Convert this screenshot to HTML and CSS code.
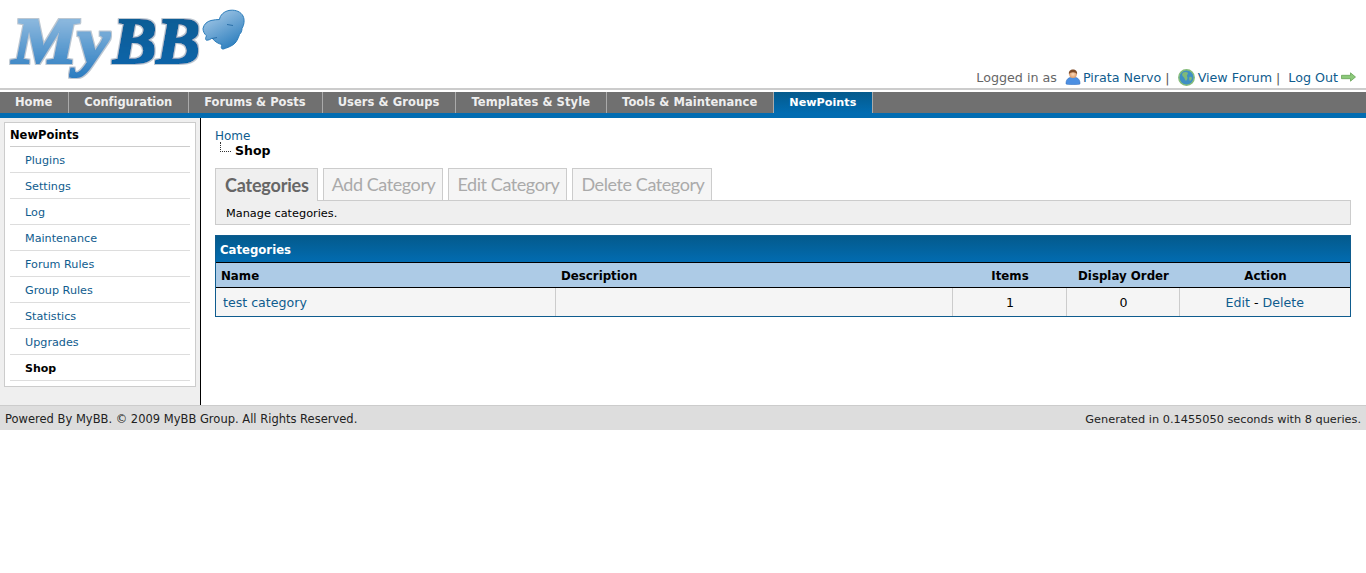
FILE: index.html
```html
<!DOCTYPE html>
<html lang="en">
<head>
  <meta charset="UTF-8">
  <title>NewPoints - Shop</title>
  <link rel="stylesheet" href="styles.css">
</head>
<body>

  <!-- Header -->
  <header class="logo-bar">
    <svg class="logo" width="250" height="84" viewBox="0 0 250 84">
      <defs>
        <linearGradient id="my-fill" x1="0" y1="0" x2="0" y2="1">
          <stop offset="0" stop-color="#a3c6e4"/>
          <stop offset="1" stop-color="#2a7cc0"/>
        </linearGradient>
        <linearGradient id="bb-fill" x1="0" y1="0" x2="0" y2="1">
          <stop offset="0" stop-color="#0f5a8f"/>
          <stop offset="1" stop-color="#0466ad"/>
        </linearGradient>
        <linearGradient id="bubble-fill" x1="0.2" y1="0" x2="0.8" y2="1">
          <stop offset="0" stop-color="#a9cbe8"/>
          <stop offset="1" stop-color="#2479bb"/>
        </linearGradient>
        <radialGradient id="head-fill">
          <stop offset="0" stop-color="#fbd9b8"/>
          <stop offset="1" stop-color="#dd9a68"/>
        </radialGradient>
        <filter id="logo-halo" x="-10%" y="-10%" width="120%" height="120%">
          <feMorphology in="SourceGraphic" operator="dilate" radius="0.7" result="fat"/>
          <feMorphology in="SourceAlpha" operator="dilate" radius="2.2" result="wide"/>
          <feFlood flood-color="#bcc7d1"/>
          <feComposite in2="wide" operator="in"/>
          <feGaussianBlur stdDeviation="0.5" result="halo"/>
          <feMerge>
            <feMergeNode in="halo"/>
            <feMergeNode in="fat"/>
          </feMerge>
        </filter>
      </defs>
      <g filter="url(#logo-halo)">
        <text class="logo-my" x="12" y="63" textLength="98" lengthAdjust="spacingAndGlyphs">My</text>
        <text class="logo-bb" x="113" y="63" textLength="87" lengthAdjust="spacingAndGlyphs">BB</text>
      </g>
      <path d="M203 28.500C204 24 207 21.500 211 20.500C214 19.800 217 19.500 219.500 19.500C219.800 15.500 224 11 230 10.300C236 9.600 241 12 243 16C245 20 244 25 242 28.500C242 31 241 33 239.500 34.500C238 39 236 43 233 44.800C230 47 226 48 223.500 49C221.500 49.200 220.500 48 222 44.500C219 44 215 42 212 38C210.500 39.500 208.500 40.200 206.500 40.200C205.300 39.800 205.300 38 206.500 35.800C204.500 34 203 31.500 203 28.500z" fill="url(#bubble-fill)" stroke="#2b7cba" stroke-width="1"/>
      <path d="M227 24.500l6 1M212 38.500l5-1" stroke="#2a6fa8" stroke-width="1" fill="none"/>
    </svg>
    <div class="user-links">
      <span class="logged-in">Logged in as</span>
      <svg class="icon icon-user" width="16" height="16" viewBox="0 0 16 16">
        <path d="M1 15c-.5-3 1.500-6 4-6.500h6c2.500.5 4.500 3.500 4 6.500-1.500 1-12.500 1-14 0z" fill="#4c8fe2" stroke="#3a70b8" stroke-width=".5"/>
        <circle cx="8" cy="5.300" r="3.800" fill="url(#head-fill)"/>
        <path d="M4 5.500C3.300 2 5.500.5 8 .5s4.700 1.500 4 5C11.500 4 10 3.200 8 3.200S4.500 4 4 5.500z" fill="#7e4a26"/>
      </svg>
      <a href="#">Pirata Nervo</a><span class="sep">|</span>
      <svg class="icon icon-globe" width="17" height="17" viewBox="0 0 17 17">
        <circle cx="8.500" cy="8.500" r="7.700" fill="#3f8fc4" stroke="#86bd7a" stroke-width="1.500"/>
        <path d="M5 3.500c2-1 4-.5 5 .5 0 1.500-1.500 2-1 3.500 1 1 .5 3-1 4.500-1.500-1-1-3-2.500-4C4 7 3.500 5 5 3.500zM11.500 8c1-.5 2 0 2.500 1-.3 1.500-1 2.500-2 3-.8-1-1-2.500-.5-4z" fill="#7fb97a"/>
      </svg>
      <a href="#">View Forum</a><span class="sep">|</span>
      <a class="logout" href="#">Log Out</a>
      <svg class="icon" width="15" height="10" viewBox="0 0 15 10">
        <path d="M.5 3.300h9V.8L14.500 5l-5 4.200V6.700h-9z" fill="#8cc97a" stroke="#5c9c4c" stroke-width=".7"/>
      </svg>
    </div>
  </header>

  <!-- Main menu -->
  <nav class="menu">
    <a href="#">Home</a>
    <a class="item-config" href="#">Configuration</a>
    <a href="#">Forums &amp; Posts</a>
    <a class="item-users" href="#">Users &amp; Groups</a>
    <a class="item-wide" href="#">Templates &amp; Style</a>
    <a class="item-tools" href="#">Tools &amp; Maintenance</a>
    <a class="active" href="#">NewPoints</a>
  </nav>

  <div class="page">

    <!-- Sidebar -->
    <aside class="sidebar">
      <div class="side-box">
        <div class="side-title">NewPoints</div>
        <ul class="side-list">
          <li><a href="#">Plugins</a></li>
          <li><a href="#">Settings</a></li>
          <li><a href="#">Log</a></li>
          <li><a href="#">Maintenance</a></li>
          <li><a href="#">Forum Rules</a></li>
          <li><a href="#">Group Rules</a></li>
          <li><a href="#">Statistics</a></li>
          <li><a href="#">Upgrades</a></li>
          <li class="current"><a href="#">Shop</a></li>
        </ul>
      </div>
    </aside>

    <!-- Content -->
    <main class="content">
      <div class="breadcrumb">
        <a href="#">Home</a>
        <div class="crumb-current"><span class="crumb-branch"></span><b>Shop</b></div>
      </div>

      <div class="tabs">
        <a class="tab active" href="#">Categories</a>
        <a class="tab" href="#">Add Category</a>
        <a class="tab" href="#">Edit Category</a>
        <a class="tab" href="#">Delete Category</a>
      </div>
      <div class="tab-desc">Manage categories.</div>

      <div class="border-wrap">
        <div class="table-title">Categories</div>
        <table class="general">
          <thead>
            <tr>
              <th class="col-name">Name</th>
              <th class="col-desc">Description</th>
              <th class="col-items center">Items</th>
              <th class="col-order center">Display Order</th>
              <th class="col-action center">Action</th>
            </tr>
          </thead>
          <tbody>
            <tr>
              <td><a href="#">test category</a></td>
              <td></td>
              <td class="center num">1</td>
              <td class="center num">0</td>
              <td class="center"><a href="#">Edit</a> - <a href="#">Delete</a></td>
            </tr>
          </tbody>
        </table>
      </div>
    </main>
  </div>

  <!-- Footer -->
  <footer class="footer">
    <span class="powered">Powered By MyBB. &copy; 2009 MyBB Group. All Rights Reserved.</span>
    <span class="generated">Generated in 0.1455050 seconds with 8 queries.</span>
  </footer>

</body>
</html>
```

FILE: styles.css
```css
body {
  margin: 0;
  background-color: #fff;
  color: #000;
  font-family: "DejaVu Sans", Verdana, sans-serif;
  font-size: 12px;
}

a {
  color: #0f5c8e;
  text-decoration: none;
}

/* Header */
.logo-bar {
  display: flex;
  justify-content: space-between;
  align-items: flex-end;
  height: 88px;
  border-bottom: 2px solid #ccc;
  margin-bottom: 2px;
}

.logo {
  align-self: flex-start;
  display: block;
}

.logo-my,
.logo-bb {
  font-family: "Liberation Serif", serif;
  font-size: 65px;
  font-weight: bold;
  font-style: italic;
}

.logo-my {
  fill: url(#my-fill);
}

.logo-bb {
  fill: url(#bb-fill);
}

.user-links {
  display: flex;
  align-items: center;
  height: 22px;
  padding-right: 10px;
  font-size: 12.7px;
  white-space: nowrap;
}

.logged-in {
  color: #666;
  margin-right: 8px;
}

.sep {
  color: #555;
  margin: 0 8px 0 4px;
}

.icon {
  display: block;
}

.icon-user {
  margin-right: 2px;
}

.icon-globe {
  margin-right: 3px;
}

.logout {
  margin-right: 3px;
}

/* Main menu */
.menu {
  display: flex;
  height: 21px;
  background-color: #707070;
  border-bottom: 5px solid #026cb1;
}

.menu a {
  display: block;
  padding: 0 16px 0 15px;
  line-height: 21px;
  color: #eee;
  font-size: 11.5px;
  font-weight: bold;
  border-right: 1px solid #aaa;
}

.menu a.item-config {
  letter-spacing: -0.08px;
}

.menu a.item-users {
  letter-spacing: 0.07px;
}

.menu a.item-wide {
  letter-spacing: 0.08px;
}

.menu a.item-tools {
  letter-spacing: 0.05px;
}

.menu a.active {
  font-size: 11.2px;
  background: linear-gradient(#045a8c, #026cb1);
  color: #fff;
}

/* Page */
.page {
  display: flex;
  height: 287px;
}

.sidebar {
  box-sizing: border-box;
  width: 201px;
  padding: 4px 4px 0;
  background-color: #efefef;
  border-right: 1px solid #000;
  flex-shrink: 0;
}

.side-box {
  box-sizing: border-box;
  height: 265px;
  padding: 0 5px;
  background-color: #fff;
  border: 1px solid #ccc;
}

.side-title {
  height: 23px;
  line-height: 25px;
  font-size: 11.5px;
  font-weight: bold;
  border-bottom: 1px solid #ccc;
}

.side-list {
  list-style: none;
  margin: 0;
  padding: 0;
}

.side-list li {
  height: 25px;
  line-height: 27px;
  padding-left: 15px;
  font-size: 11.2px;
  border-bottom: 1px solid #ddd;
}

.side-list li.current a {
  color: #000;
  font-weight: bold;
  font-size: 11px;
}

.content {
  flex: 1;
  padding: 11px 15px 0 14px;
}

/* Breadcrumb */
.breadcrumb {
  font-size: 12px;
  height: 39px;
  line-height: 14px;
}

.crumb-current {
  display: flex;
  line-height: 16px;
  font-size: 12.5px;
}

.crumb-branch {
  width: 10px;
  height: 9px;
  margin: -1px 4px 0 5px;
  border-left: 1px dotted #333;
  border-bottom: 1px dotted #333;
}

/* Tabs */
.tabs {
  display: flex;
  gap: 5px;
  align-items: flex-end;
  height: 32px;
}

.tab {
  box-sizing: border-box;
  height: 32px;
  padding: 0 7px 0 8px;
  line-height: 31px;
  font-family: Lato, sans-serif;
  font-size: 18px;
  letter-spacing: -0.42px;
  color: #aaa;
  background-color: #f5f5f5;
  border: 1px solid #ccc;
  border-bottom: 0;
}

.tab.active {
  height: 33px;
  margin-bottom: -1px;
  padding: 0 8px 0 9px;
  position: relative;
  line-height: 33px;
  color: #666;
  font-weight: bold;
  letter-spacing: -0.2px;
  background-color: #efefef;
}

.tab-desc {
  box-sizing: border-box;
  height: 25px;
  padding-left: 10px;
  line-height: 25px;
  font-size: 11.3px;
  background-color: #efefef;
  border: 1px solid #ccc;
  margin-bottom: 10px;
}

/* Table */
.border-wrap {
  border: 1px solid #0f5c8e;
}

.table-title {
  box-sizing: border-box;
  height: 27px;
  padding-left: 4px;
  line-height: 28px;
  color: #fff;
  font-size: 11.7px;
  font-weight: bold;
  background: linear-gradient(#045a8c, #026cb1);
  border-bottom: 1px solid #000;
}

table.general {
  width: 100%;
  table-layout: fixed;
  border-collapse: collapse;
}

table.general th {
  box-sizing: border-box;
  height: 24px;
  padding: 3px 5px 0;
  text-align: left;
  font-size: 11.8px;
  background-color: #adcbe6;
  border-bottom: 1px solid #000;
}

table.general th.col-desc {
  padding-left: 6px;
}

table.general th.center {
  padding-left: 7px;
}

table.general td {
  box-sizing: border-box;
  height: 29px;
  padding: 1px 7px 0;
  font-size: 12.6px;
  background-color: #f5f5f5;
  border-right: 1px solid #ccc;
}

table.general td.num {
  padding-left: 9px;
}

table.general td:last-child {
  border-right: 0;
}

table.general .center {
  text-align: center;
}

.col-name { width: 339px; }
.col-desc { width: 397px; }
.col-items { width: 114px; }
.col-order { width: 113px; }
.col-action { width: auto; }

/* Footer */
.footer {
  display: flex;
  justify-content: space-between;
  height: 24px;
  padding: 0 5px;
  line-height: 27px;
  color: #222;
  background-color: #ddd;
  border-top: 1px solid #ccc;
}

.powered {
  font-size: 11.5px;
}

.generated {
  font-size: 11.3px;
}
```
